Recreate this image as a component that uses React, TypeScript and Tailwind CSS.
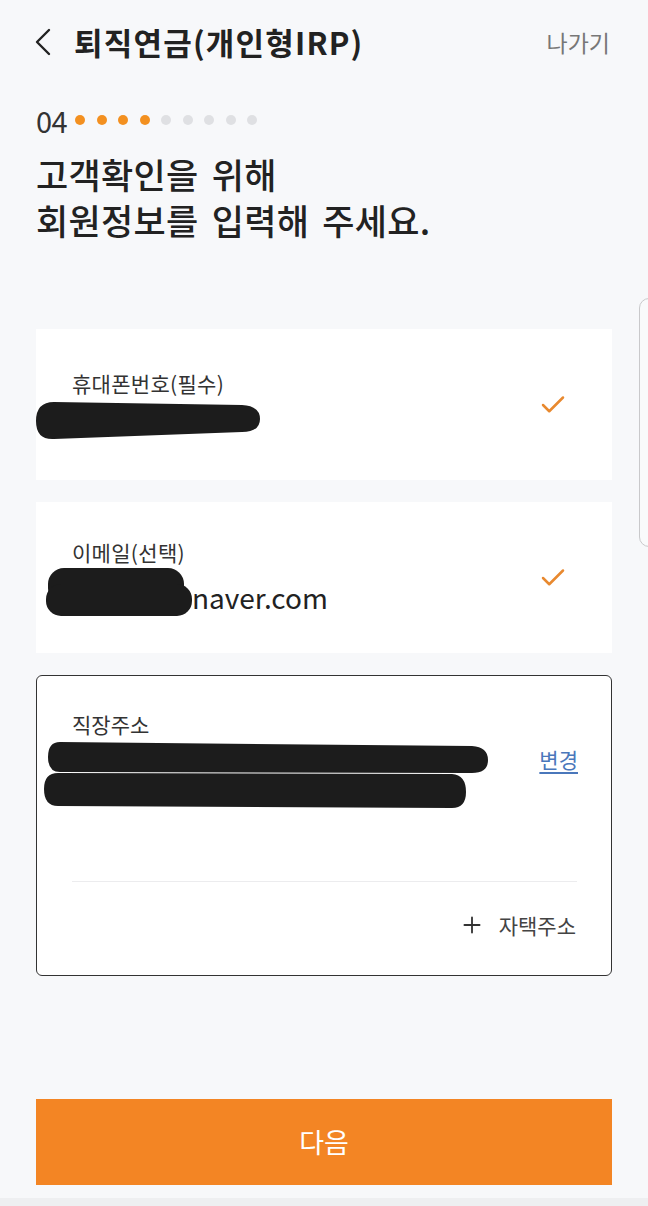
import * as React from "react";
import { Check, Plus } from "lucide-react";

const font = "font-['Noto_Sans_CJK_KR','Noto_Sans',sans-serif]";

function ChevronLeft() {
  return (
    <svg width="18" height="28" viewBox="0 0 18 28" fill="none">
      <path d="M15 2 L3 14 L15 26" stroke="#222" strokeWidth="2.4" strokeLinecap="round" strokeLinejoin="round" />
    </svg>
  );
}

function StepDots({ total, done }: { total: number; done: number }) {
  return (
    <div className="flex items-center gap-[11.5px]">
      {Array.from({ length: total }).map((_, i) => (
        <span
          key={i}
          className={`h-[10px] w-[10px] rounded-full ${i < done ? "bg-[#f39020]" : "bg-[#dfe0e3]"}`}
        />
      ))}
    </div>
  );
}

// redaction scribbles from the screenshot
function PhoneBlob() {
  return (
    <svg width="226" height="44" viewBox="0 0 226 44" className="-ml-[36px] block">
      <path d="M18 1 L206 4 Q224 5 224 18 Q224 31 206 31 L18 38 Q0 39 0 20 Q0 1 18 1 Z" fill="#1c1c1c" />
    </svg>
  );
}

function EmailBlob() {
  return (
    <svg width="148" height="50" viewBox="0 0 148 50" className="block">
      <rect x="2" y="0" width="136" height="36" rx="16" fill="#1c1c1c" />
      <rect x="0" y="16" width="146" height="32" rx="15" fill="#1c1c1c" />
    </svg>
  );
}

function AddressBlob() {
  return (
    <svg width="450" height="70" viewBox="0 0 450 70" className="-ml-[28px] block">
      <path d="M16 0 L428 4 Q444 5 444 18 Q444 31 428 31 L16 30 Q4 30 4 15 Q4 0 16 0 Z" fill="#1c1c1c" />
      <path d="M14 31 L408 32 Q422 33 422 50 Q422 66 408 66 L14 64 Q0 64 0 47 Q0 31 14 31 Z" fill="#1c1c1c" />
    </svg>
  );
}

function FieldCard({ label, children }: { label: string; children: React.ReactNode }) {
  return (
    <div className="flex h-[151px] items-center bg-white pl-[36px] pr-[44px]">
      <div className="flex-1">
        <div className="text-[21px] leading-[28px] tracking-[0.3px] text-[#333]">{label}</div>
        {children}
      </div>
      <Check className="h-[30px] w-[30px] text-[#e8892f]" strokeWidth={2} />
    </div>
  );
}

export default function App() {
  return (
    <div className={`relative min-h-[1206px] w-[648px] overflow-hidden bg-[#f7f8fa] ${font}`}>
      {/* header */}
      <div className="flex h-[84px] items-center pl-[34px] pr-[38px]">
        <ChevronLeft />
        <h1 className="ml-[22px] text-[31px] font-bold tracking-[1.2px] text-[#222]">퇴직연금(개인형IRP)</h1>
        <button className="ml-auto text-[23px] text-[#777]">나가기</button>
      </div>

      <div className="px-[36px]">
        <div className="mt-[21px] flex h-[30px] items-center">
          <span className="text-[29px] leading-[30px] tracking-[-0.5px] text-[#333]">04</span>
          <div className="ml-[8px]">
            <StepDots total={9} done={4} />
          </div>
        </div>

        <h2 className="mt-[16px] text-[35px] font-medium leading-[46px] tracking-[0.3px] text-[#222] [word-spacing:5px]">
          <span className="block">고객확인을 위해</span>
          <span className="block">회원정보를 입력해 주세요.</span>
        </h2>

        <div className="mt-[86px] flex flex-col gap-[22px]">
          <FieldCard label="휴대폰번호(필수)">
            <div className="mt-[4px] h-[40px]">
              <PhoneBlob />
            </div>
          </FieldCard>

          <FieldCard label="이메일(선택)">
            <div className="-ml-[26px] mt-[2px] flex h-[50px] items-center">
              <EmailBlob />
              <span className="-ml-[2px] mt-[8px] text-[28px] text-[#222]">naver.com</span>
            </div>
          </FieldCard>

          <div className="h-[301px] rounded-[6px] border border-[#333] bg-white pl-[35px] pr-[33px] pt-[34px]">
            <div className="text-[21px] leading-[28px] text-[#333]">직장주소</div>
            <div className="mt-[4px] flex h-[74px] items-start justify-between">
              <AddressBlob />
              <a className="mt-[3px] text-[21px] leading-[28px] text-[#4a77bb] underline underline-offset-4">변경</a>
            </div>
            <div className="mt-[65px] mr-[1px] h-px bg-[#ececee]" />
            <div className="mt-[29px] flex items-center justify-end gap-[14px] pr-[2px] text-[21px] leading-[28px] text-[#444]">
              <Plus className="h-[26px] w-[26px] text-[#333]" strokeWidth={1.7} />
              <span>자택주소</span>
            </div>
          </div>
        </div>

        <button className="mt-[123px] flex h-[86px] w-full items-center justify-center bg-[#f38524] text-[27px] text-white">
          다음
        </button>
      </div>

      <div className="absolute bottom-0 left-0 h-[8px] w-full bg-[#eeeff1]" />

      {/* edge panel handle */}
      <div className="absolute left-[639px] top-[298px] h-[249px] w-[20px] rounded-[10px] border border-[#c9c9cb] bg-[#f9fafb]" />
    </div>
  );
}
